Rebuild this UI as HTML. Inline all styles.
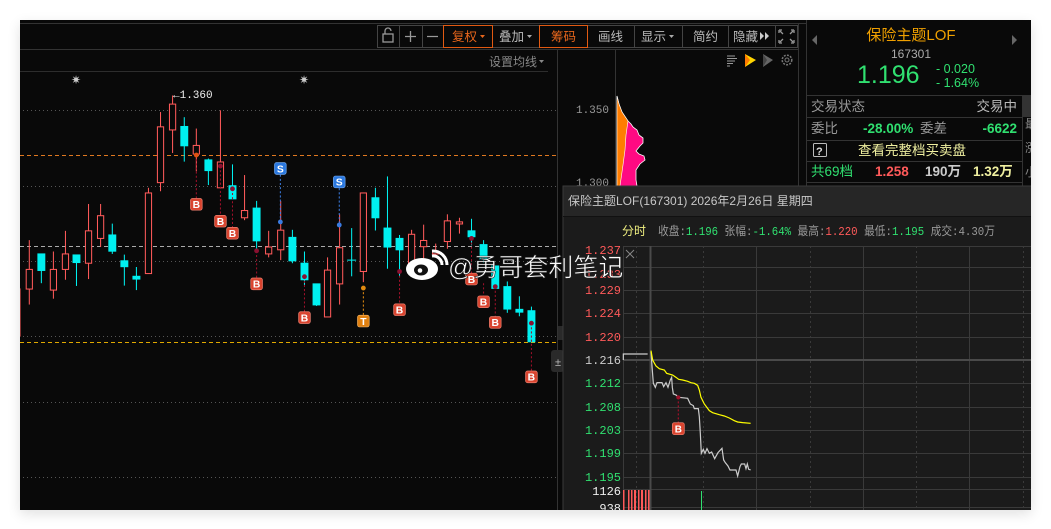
<!DOCTYPE html>
<html><head><meta charset="utf-8"><style>
*{margin:0;padding:0;box-sizing:border-box}
body{width:1051px;height:529px;background:#fff;position:relative;overflow:hidden;font-family:"Liberation Sans","Noto Sans CJK SC",sans-serif}
.app{position:absolute;left:20px;top:20px;width:1011px;height:490px;background:#090909;overflow:hidden;box-shadow:0 4px 12px rgba(0,0,0,.12)}
</style></head><body>
<div class="app"></div>
<svg width="1051" height="529" style="position:absolute;left:0;top:0" font-family="Liberation Sans, Noto Sans CJK SC, sans-serif">
<defs><clipPath id="cl"><rect x="20" y="20" width="1011" height="490"/></clipPath></defs>
<g clip-path="url(#cl)">
<line x1="20" y1="23.5" x2="806" y2="23.5" stroke="#333"/>
<line x1="20" y1="49.5" x2="798" y2="49.5" stroke="#333"/>
<line x1="20" y1="71.5" x2="548" y2="71.5" stroke="#2d2d2d"/>
<line x1="557.5" y1="49" x2="557.5" y2="510" stroke="#333"/>
<line x1="615.5" y1="49" x2="615.5" y2="186" stroke="#333"/>
<line x1="798.5" y1="23" x2="798.5" y2="186" stroke="#333"/>
<line x1="806.5" y1="20" x2="806.5" y2="186" stroke="#333"/>
<rect x="377.5" y="25.5" width="420" height="22" fill="none" stroke="#444"/>
<g stroke="#444">
<line x1="399.5" y1="25" x2="399.5" y2="47"/><line x1="422.5" y1="25" x2="422.5" y2="47"/><line x1="443.5" y1="25" x2="443.5" y2="47"/><line x1="492.5" y1="25" x2="492.5" y2="47"/><line x1="539.5" y1="25" x2="539.5" y2="47"/><line x1="587.5" y1="25" x2="587.5" y2="47"/><line x1="634.5" y1="25" x2="634.5" y2="47"/><line x1="682.5" y1="25" x2="682.5" y2="47"/><line x1="728.5" y1="25" x2="728.5" y2="47"/><line x1="775.5" y1="25" x2="775.5" y2="47"/></g>
<rect x="443.5" y="25.5" width="49" height="22" fill="none" stroke="#e25a12"/>
<rect x="539.5" y="25.5" width="48" height="22" fill="none" stroke="#e25a12"/>
<g fill="none" stroke="#999" stroke-width="1.3"><rect x="383" y="34" width="10" height="8"/><path d="M385 34v-3a3 3 0 0 1 6 0"/>
<path d="M405 36.5h11M410.5 31v11M427 36.5h11"/>
<path d="M779 30h3M779 30v3M794 30h-3M794 30v3M779 43h3M779 43v-3M794 43h-3M794 43v-3M780 31l3 3M793 31l-3 3M780 42l3-3M793 42l-3-3"/></g>
<g font-size="12.5" fill="#bbb">
<text x="452" y="41" fill="#e8661c">复权</text><path d="M480 35h5l-2.5 3z" fill="#e8661c"/>
<text x="499" y="41">叠加</text><path d="M527 35h5l-2.5 3z" fill="#aaa"/>
<text x="551" y="41" fill="#e8661c">筹码</text>
<text x="598" y="41">画线</text>
<text x="641" y="41">显示</text><path d="M669 35h5l-2.5 3z" fill="#aaa"/>
<text x="693" y="41">简约</text>
<text x="733" y="41">隐藏</text><path d="M760 32l4 4-4 4zM765 32l4 4-4 4z" fill="#ccc"/>
</g>
<text x="489" y="66" font-size="12" fill="#888">设置均线</text><path d="M539 60h5l-2.5 3z" fill="#888"/>
<g stroke="#999"><path d="M727 56h8M727 58.5h10M727 61h8M727 63.5h6M727 66h3"/></g>
<path d="M745 54l11 6-11 7z" fill="#ffd400"/><path d="M745 54l5 6-5 7z" fill="#ff7a00"/>
<path d="M763 54l10 6-10 7z" fill="#666"/><path d="M763 54l4 6-4 7z" fill="#444"/>
<circle cx="787" cy="60" r="4.8" fill="none" stroke="#777" stroke-width="1.5" stroke-dasharray="2 1.2"/><circle cx="787" cy="60" r="2" fill="none" stroke="#777"/>
<text x="71" y="84" font-size="12" fill="#ccc">✷</text><text x="299" y="84" font-size="12" fill="#ccc">✷</text>
<text x="173" y="98" font-size="11" fill="#eee" font-family="Liberation Mono">←1.360</text>
<g stroke="#555" stroke-dasharray="1 3">
<line x1="23" y1="110.5" x2="557" y2="110.5"/><line x1="23" y1="186.5" x2="557" y2="186.5"/><line x1="23" y1="261.5" x2="557" y2="261.5"/><line x1="23" y1="336.5" x2="557" y2="336.5"/><line x1="23" y1="402.5" x2="557" y2="402.5"/><line x1="23" y1="477.5" x2="557" y2="477.5"/></g>
<line x1="20" y1="155.5" x2="557" y2="155.5" stroke="#e07820" stroke-dasharray="4 3"/>
<line x1="20" y1="246.5" x2="557" y2="246.5" stroke="#aaa" stroke-dasharray="4 3"/>
<line x1="20" y1="342.5" x2="557" y2="342.5" stroke="#e0a800" stroke-dasharray="4 3"/>
<g transform="translate(20,80) scale(0.3444)">
<g stroke="#ff5a5a" fill="none" stroke-width="3">
<line x1="0" y1="605" x2="0" y2="745"/>
<line x1="27" y1="465" x2="27" y2="652"/><rect x="18" y="550" width="18" height="57" fill="#090909"/>
<line x1="97" y1="498" x2="97" y2="635"/><rect x="88" y="550" width="18" height="60" fill="#090909"/>
<line x1="132" y1="438" x2="132" y2="580"/><rect x="123" y="505" width="18" height="45" fill="#090909"/>
<line x1="199" y1="360" x2="199" y2="578"/><rect x="190" y="438" width="18" height="94" fill="#090909"/>
<line x1="234" y1="360" x2="234" y2="485"/><rect x="225" y="394" width="18" height="66" fill="#090909"/>
<line x1="373" y1="313" x2="373" y2="562"/><rect x="364" y="328" width="18" height="234" fill="#090909"/>
<line x1="408" y1="93" x2="408" y2="323"/><rect x="399" y="136" width="18" height="162" fill="#090909"/>
<line x1="443" y1="45" x2="443" y2="212"/><rect x="434" y="70" width="18" height="75" fill="#090909"/>
<line x1="512" y1="141" x2="512" y2="265"/><rect x="503" y="190" width="18" height="25" fill="#090909"/>
<line x1="582" y1="88" x2="582" y2="313"/><rect x="573" y="238" width="18" height="75" fill="#090909"/>
<line x1="652" y1="276" x2="652" y2="407"/><rect x="643" y="379" width="18" height="21" fill="#090909"/>
<line x1="722" y1="438" x2="722" y2="515"/><rect x="713" y="485" width="18" height="20" fill="#090909"/>
<line x1="757" y1="351" x2="757" y2="523"/><rect x="748" y="436" width="18" height="57" fill="#090909"/>
<line x1="893" y1="515" x2="893" y2="688"/><rect x="884" y="552" width="18" height="136" fill="#090909"/>
<line x1="928" y1="390" x2="928" y2="652"/><rect x="919" y="487" width="18" height="105" fill="#090909"/>
<line x1="997" y1="328" x2="997" y2="587"/><rect x="988" y="328" width="18" height="228" fill="#090909"/>
<line x1="1137" y1="435" x2="1137" y2="541"/><rect x="1128" y="448" width="18" height="93" fill="#090909"/>
<line x1="1172" y1="420" x2="1172" y2="520"/><rect x="1163" y="466" width="18" height="18" fill="#090909"/>
<line x1="1207" y1="475" x2="1207" y2="510"/><rect x="1198" y="498" width="18" height="7" fill="#090909"/>
<line x1="1241" y1="390" x2="1241" y2="490"/><rect x="1232" y="409" width="18" height="60" fill="#090909"/>
<line x1="1276" y1="400" x2="1276" y2="446"/><rect x="1267" y="412" width="18" height="6" fill="#090909"/>
</g>
<g stroke="#00f0f0" fill="#00f0f0" stroke-width="3">
<line x1="62" y1="505" x2="62" y2="590"/><rect x="52" y="505" width="20" height="48"/>
<line x1="164" y1="508" x2="164" y2="598"/><rect x="154" y="508" width="20" height="22"/>
<line x1="268" y1="417" x2="268" y2="505"/><rect x="258" y="450" width="20" height="47"/>
<line x1="303" y1="507" x2="303" y2="597"/><rect x="293" y="525" width="20" height="17"/>
<line x1="338" y1="543" x2="338" y2="610"/><rect x="328" y="570" width="20" height="8"/>
<line x1="477" y1="108" x2="477" y2="237"/><rect x="467" y="135" width="20" height="56"/>
<line x1="547" y1="228" x2="547" y2="305"/><rect x="537" y="232" width="20" height="31"/>
<line x1="617" y1="245" x2="617" y2="345"/><rect x="607" y="307" width="20" height="38"/>
<line x1="687" y1="351" x2="687" y2="492"/><rect x="677" y="372" width="20" height="95"/>
<line x1="791" y1="435" x2="791" y2="532"/><rect x="781" y="457" width="20" height="68"/>
<line x1="826" y1="498" x2="826" y2="596"/><rect x="816" y="532" width="20" height="48"/>
<line x1="861" y1="592" x2="861" y2="656"/><rect x="851" y="592" width="20" height="61"/>
<line x1="963" y1="430" x2="963" y2="570"/><line x1="950" y1="523" x2="976" y2="523"/>
<line x1="1032" y1="313" x2="1032" y2="437"/><rect x="1022" y="342" width="20" height="58"/>
<line x1="1067" y1="280" x2="1067" y2="548"/><rect x="1057" y="430" width="20" height="55"/>
<line x1="1102" y1="450" x2="1102" y2="570"/><rect x="1092" y="460" width="20" height="33"/>
<line x1="1311" y1="403" x2="1311" y2="480"/><rect x="1301" y="438" width="20" height="17"/>
<line x1="1346" y1="465" x2="1346" y2="530"/><rect x="1336" y="478" width="20" height="42"/>
<rect x="1370" y="540" width="20" height="65"/>
<line x1="1415" y1="585" x2="1415" y2="676"/><rect x="1405" y="600" width="20" height="65"/>
<line x1="1450" y1="628" x2="1450" y2="686"/><rect x="1440" y="666" width="20" height="8"/>
<line x1="1485" y1="658" x2="1485" y2="760"/><rect x="1475" y="670" width="20" height="90"/>
</g>
<g stroke="#a0102a" stroke-width="3" stroke-dasharray="6 6">
<line x1="512" y1="218" x2="512" y2="345"/><line x1="582" y1="250" x2="582" y2="395"/><line x1="617" y1="316" x2="617" y2="430"/><line x1="687" y1="496" x2="687" y2="576"/><line x1="826" y1="571" x2="826" y2="674"/><line x1="1102" y1="556" x2="1102" y2="651"/><line x1="1311" y1="460" x2="1311" y2="562"/><line x1="1346" y1="590" x2="1346" y2="628"/><line x1="1380" y1="600" x2="1380" y2="688"/><line x1="1485" y1="706" x2="1485" y2="846"/></g>
<g stroke="#3a7be0" stroke-width="3" stroke-dasharray="6 6"><line x1="756" y1="275" x2="756" y2="412"/><line x1="927" y1="314" x2="927" y2="421"/></g>
<line x1="997" y1="604" x2="997" y2="684" stroke="#e08a10" stroke-width="3" stroke-dasharray="6 6"/>
<g fill="#8a1030"><circle cx="582" cy="250" r="7"/><circle cx="617" cy="316" r="7"/><circle cx="687" cy="496" r="7"/><circle cx="826" cy="571" r="7"/><circle cx="1102" cy="556" r="7"/><circle cx="1311" cy="460" r="7"/><circle cx="1380" cy="600" r="7"/><circle cx="1485" cy="706" r="7"/></g>
<circle cx="512" cy="218" r="7" fill="#e05010"/><circle cx="997" cy="604" r="7" fill="#e08a10"/>
<circle cx="756" cy="412" r="7" fill="#3a7be0"/><circle cx="927" cy="421" r="7" fill="#3a7be0"/>
<g font-size="30" fill="#fff" text-anchor="middle" font-weight="bold">
<g fill="#d9442f" stroke="#f08070" stroke-width="2">
<rect x="495" y="344" width="34" height="34" rx="6"/><rect x="565" y="393" width="34" height="34" rx="6"/><rect x="600" y="428" width="34" height="34" rx="6"/><rect x="670" y="575" width="34" height="34" rx="6"/><rect x="809" y="673" width="34" height="34" rx="6"/><rect x="1085" y="650" width="34" height="34" rx="6"/><rect x="1294" y="561" width="34" height="34" rx="6"/><rect x="1329" y="627" width="34" height="34" rx="6"/><rect x="1363" y="687" width="34" height="34" rx="6"/><rect x="1468" y="845" width="34" height="34" rx="6"/></g>
<rect x="739" y="240" width="34" height="34" rx="6" fill="#2a78e0" stroke="#70a8f0" stroke-width="2"/><rect x="910" y="279" width="34" height="34" rx="6" fill="#2a78e0" stroke="#70a8f0" stroke-width="2"/>
<rect x="980" y="683" width="34" height="34" rx="6" fill="#e08010" stroke="#f0b060" stroke-width="2"/>
<text x="512" y="372">B</text><text x="582" y="421">B</text><text x="617" y="456">B</text><text x="687" y="603">B</text><text x="826" y="701">B</text><text x="1102" y="678">B</text><text x="1311" y="589">B</text><text x="1346" y="655">B</text><text x="1380" y="715">B</text><text x="1485" y="873">B</text>
<text x="756" y="268">S</text><text x="927" y="307">S</text><text x="997" y="711">T</text>
</g>
</g>
<rect x="551" y="350" width="13" height="22" rx="3" fill="#2a2a2a"/><text x="555" y="366" font-size="11" fill="#bbb">±</text>
<rect x="558" y="326" width="5" height="14" fill="#2a2a2a"/>
<g font-size="11" fill="#999" font-family="Liberation Mono" text-anchor="end"><text x="609" y="113">1.350</text><text x="609" y="186">1.300</text></g>
<path d="M617 96L619 104 622 112 626 118 628 121 631 124 633 127 637 130 639 135 643 138 643 143 640 146 636 151 639 154 644 156 645 160 640 164 636 170 636 180 637 186 617 186Z" fill="#ff0a82" stroke="#fff" stroke-width="0.8"/>
<path d="M617 96L619 104 622 112 626 118 628 121 626 135 625 150 623 165 620 186 617 186Z" fill="#ff7d00" stroke="#fff" stroke-width="0.6"/>
<path d="M812 40l5-5v10z" fill="#666"/><path d="M1017 40l-5-5v10z" fill="#666"/>
<text x="911" y="40" font-size="15" fill="#f0a000" text-anchor="middle">保险主题LOF</text>
<text x="911" y="58" font-size="12" fill="#aaa" text-anchor="middle">167301</text>
<text x="857" y="83" font-size="25" fill="#30e070">1.196</text>
<text x="936" y="73" font-size="12.5" fill="#30e070">- 0.020</text>
<text x="936" y="87" font-size="12.5" fill="#30e070">- 1.64%</text>
<g stroke="#333"><line x1="807" y1="95.5" x2="1023" y2="95.5"/><line x1="807" y1="117.5" x2="1023" y2="117.5"/><line x1="807" y1="140.5" x2="1023" y2="140.5"/><line x1="807" y1="161.5" x2="1023" y2="161.5"/><line x1="807" y1="182.5" x2="1023" y2="182.5"/><line x1="1022.5" y1="95" x2="1022.5" y2="186"/></g>
<rect x="1023" y="95" width="8" height="22" fill="#333"/>
<g font-size="13.5">
<text x="811" y="111" fill="#999">交易状态</text><text x="1017" y="111" fill="#bbb" text-anchor="end">交易中</text>
<text x="811" y="133" fill="#999">委比</text><text x="863" y="133" fill="#30e070" font-weight="bold">-28.00%</text><text x="920" y="133" fill="#999">委差</text><text x="1017" y="133" fill="#30e070" text-anchor="end" font-weight="bold">-6622</text>
<rect x="813.5" y="143.5" width="13" height="13" fill="none" stroke="#bbb" rx="1"/><text x="816" y="155" font-size="11" fill="#ddd" font-weight="bold">?</text>
<text x="858" y="155" fill="#f0f0a0">查看完整档买卖盘</text>
<text x="811" y="176" fill="#30e070">共69档</text><text x="875" y="176" fill="#ff5a5a" font-weight="bold">1.258</text><text x="925" y="176" fill="#ccc" font-weight="bold">190万</text><text x="973" y="176" fill="#f0f0a0" font-weight="bold">1.32万</text>
</g>
<g fill="#888" font-size="12"><text x="1025" y="128">最</text><text x="1025" y="152">涨</text><text x="1025" y="176">小</text></g>
<rect x="563" y="186" width="470" height="326" fill="#1b1b1b" stroke="#3a3a3a"/>
<rect x="563.5" y="186.5" width="470" height="30" fill="#262626"/>
<line x1="563" y1="216.5" x2="1031" y2="216.5" stroke="#111"/>
<text x="568" y="205" font-size="12" fill="#c8c8c8">保险主题LOF(167301) 2026年2月26日 星期四</text>
<g font-size="12" font-family="Liberation Mono, Noto Sans CJK SC, monospace">
<text x="622" y="235" fill="#f0f080">分时</text>
<text x="658" y="235" fill="#999" textLength="337" lengthAdjust="spacingAndGlyphs">收盘:<tspan fill="#30e070">1.196</tspan> 张幅:<tspan fill="#30e070">-1.64%</tspan> 最高:<tspan fill="#ff5a5a">1.220</tspan> 最低:<tspan fill="#30e070">1.195</tspan> 成交:4.30万</text>
</g>
<g stroke="#3a3a3a"><line x1="623" y1="246.5" x2="1031" y2="246.5"/><line x1="623" y1="267.5" x2="1031" y2="267.5"/><line x1="623" y1="290.5" x2="1031" y2="290.5"/><line x1="623" y1="313.5" x2="1031" y2="313.5"/><line x1="623" y1="337.5" x2="1031" y2="337.5"/><line x1="623" y1="383.5" x2="1031" y2="383.5"/><line x1="623" y1="407.5" x2="1031" y2="407.5"/><line x1="623" y1="430.5" x2="1031" y2="430.5"/><line x1="623" y1="453.5" x2="1031" y2="453.5"/><line x1="623" y1="477.5" x2="1031" y2="477.5"/><line x1="623" y1="489.5" x2="1031" y2="489.5"/><line x1="623" y1="507.5" x2="1031" y2="507.5"/>
<line x1="623.5" y1="246" x2="623.5" y2="510"/><line x1="756.5" y1="246" x2="756.5" y2="510"/><line x1="863.5" y1="246" x2="863.5" y2="510"/><line x1="969.5" y1="246" x2="969.5" y2="510"/></g>
<line x1="650.5" y1="246" x2="650.5" y2="510" stroke="#4a4a4a" stroke-width="2"/>
<line x1="623" y1="360" x2="1031" y2="360" stroke="#4a4a4a" stroke-width="2"/>
<g stroke="#3a3a3a" stroke-dasharray="2 3"><line x1="636.5" y1="246" x2="636.5" y2="510"/><line x1="703.5" y1="246" x2="703.5" y2="510"/><line x1="810.5" y1="246" x2="810.5" y2="510"/><line x1="916.5" y1="246" x2="916.5" y2="510"/><line x1="1023.5" y1="246" x2="1023.5" y2="510"/></g>
<path d="M626 250l8 8M634 250l-8 8" stroke="#888"/>
<g font-size="12" font-family="Liberation Mono" text-anchor="end">
<text x="621" y="254" fill="#ff5a5a">1.237</text><text x="621" y="278" fill="#ff5a5a">1.233</text><text x="621" y="294" fill="#ff5a5a">1.229</text><text x="621" y="317" fill="#ff5a5a">1.224</text><text x="621" y="341" fill="#ff5a5a">1.220</text><text x="621" y="364" fill="#ccc">1.216</text><text x="621" y="387" fill="#30e070">1.212</text><text x="621" y="411" fill="#30e070">1.208</text><text x="621" y="434" fill="#30e070">1.203</text><text x="621" y="457" fill="#30e070">1.199</text><text x="621" y="481" fill="#30e070">1.195</text><text x="621" y="495" fill="#eee">1126</text><text x="621" y="512" fill="#eee">938</text></g>
<g fill="#ff5a5a"><rect x="623" y="490" width="1.5" height="20"/><rect x="628" y="490" width="1.5" height="20"/><rect x="631" y="490" width="1.5" height="20"/><rect x="634" y="490" width="2" height="20"/><rect x="638" y="490" width="1.5" height="20"/><rect x="641" y="490" width="2" height="20"/><rect x="645" y="490" width="1.5" height="20"/><rect x="648" y="490" width="1.5" height="20"/></g>
<rect x="701" y="491" width="1" height="19" fill="#30e070"/>
<g transform="translate(556,280) scale(0.3333)" fill="none" stroke-width="1.2">
<polyline vector-effect="non-scaling-stroke" stroke="#ccc" points="202,240 202,222 275,222"/>
<polyline vector-effect="non-scaling-stroke" stroke="#ccc" points="285,215 288,258 292,310 298,322 303,308 318,308 323,320 330,308 336,322 343,300 347,292 349,322 352,342 360,345 368,352 395,355 403,372 412,377 415,386 427,386 430,410 433,460 436,520 442,508 447,520 453,506 460,520 467,516 476,536 486,518 498,505 503,540 508,548 516,558 522,570 540,570 545,588 552,560 556,552 566,552 570,566 574,552 578,568 584,570"/>
<polyline vector-effect="non-scaling-stroke" stroke="#ffff00" points="285,212 290,240 300,258 310,266 325,270 332,280 350,285 360,292 368,298 380,300 395,304 405,308 415,310 425,316 430,330 435,352 445,372 460,392 470,398 490,404 505,408 520,414 535,422 545,426 560,428 584,430"/>
<line vector-effect="non-scaling-stroke" x1="367" y1="352" x2="367" y2="428" stroke="#a0102a" stroke-dasharray="2 2"/>
<circle cx="367" cy="352" r="6" fill="#a0102a" stroke="none"/>
<rect x="349" y="428" width="36" height="36" rx="6" fill="#d9442f" stroke="#f08070" stroke-width="2"/>
<text x="367" y="457" font-size="30" fill="#fff" stroke="none" text-anchor="middle" font-weight="bold">B</text>
</g>
<g transform="translate(405,252)">
<ellipse cx="17" cy="17" rx="16" ry="11" fill="#fff"/>
<ellipse cx="16" cy="18" rx="7" ry="5.5" fill="#111"/><circle cx="15" cy="18.5" r="2.3" fill="#fff"/>
<path d="M27 4a9 9 0 0 1 10 9M27 -1a14 14 0 0 1 15 14" stroke="#fff" stroke-width="3" fill="none"/>
</g>
<text x="448" y="276" font-size="25" fill="#fff" stroke="#222" stroke-width="0.6">@勇哥套利笔记</text>
</g>
</svg>
</body></html>
